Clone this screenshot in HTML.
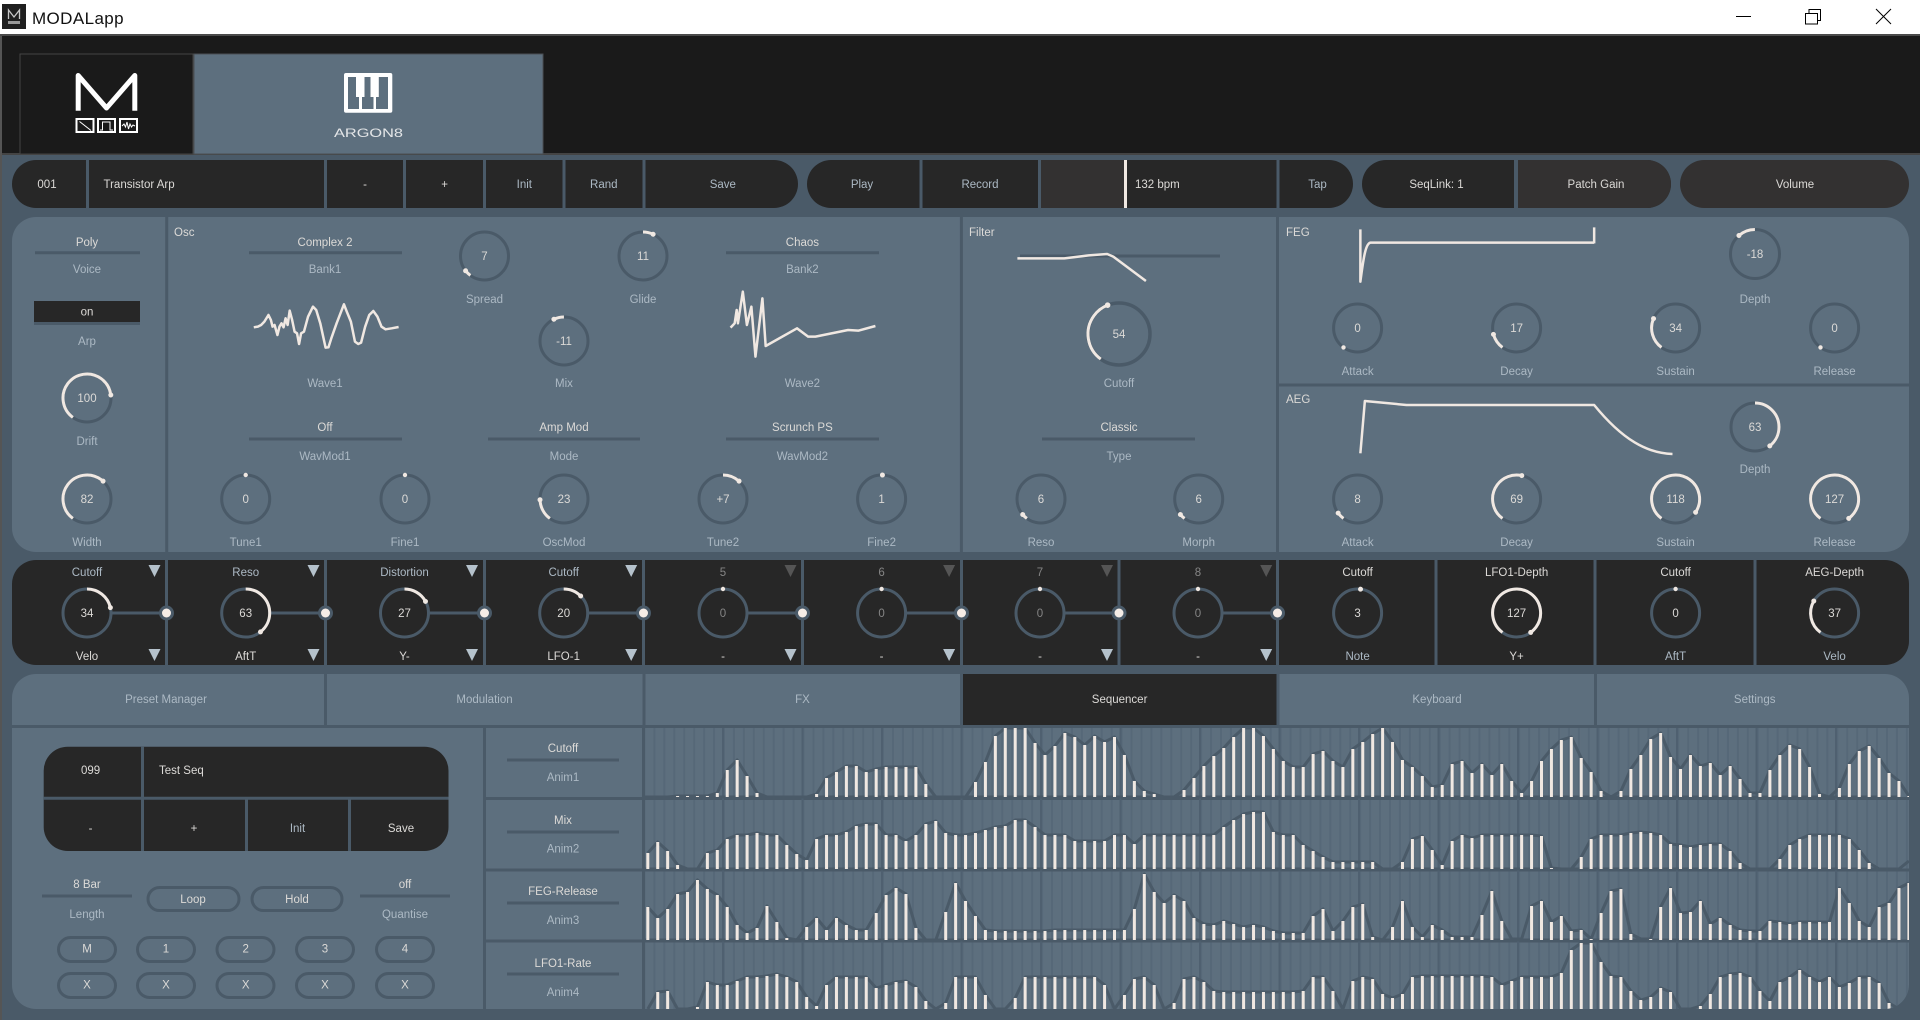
<!DOCTYPE html>
<html><head><meta charset="utf-8"><title>MODALapp</title>
<style>
html,body{margin:0;padding:0;width:1920px;height:1020px;overflow:hidden;background:#4a5a68}
svg{display:block;position:absolute;left:0;top:0}
text{font-family:"Liberation Sans",sans-serif;font-size:11.5px;dominant-baseline:central;text-anchor:middle;fill:#acb9c4;transform:translateY(.8px)}
.w{fill:#dcdad7}.g{fill:#858585}.st{text-anchor:start}
.t{fill:none;stroke:#4a5a68;stroke-width:3}
.a{fill:none;stroke:#f0e8e2;stroke-width:3}
.d{fill:#f0e8e2}
.ln{stroke:#4a5a68;stroke-width:3;fill:none}
.e{fill:none;stroke:#4a5a68;stroke-width:3;vector-effect:non-scaling-stroke;stroke-linejoin:round}
.b{fill:none;stroke:#f0e8e2;stroke-width:3;vector-effect:non-scaling-stroke}
.c{fill:none;stroke:#f0e8e2;stroke-width:2.5;vector-effect:non-scaling-stroke;stroke-linejoin:round}
.p{fill:none;stroke:#4a5a68;stroke-width:3}
</style></head><body>
<svg width="1920" height="1020" viewBox="0 0 1920 1020" xmlns="http://www.w3.org/2000/svg">
<defs><pattern id="s" x="643.5" y="0" width="9.94" height="10" patternUnits="userSpaceOnUse"><rect width="2" height="10" fill="#566878"/></pattern></defs>
<!-- title bar -->
<rect width="1920" height="34" fill="#fff"/>
<rect y="34" width="1920" height="2" fill="#4a4a4a"/>
<rect x="2" y="4" width="24" height="25" fill="#1f1f1f"/>
<path d="M8.5 19V10L14 17L19.5 10V19" fill="none" stroke="#c8c8c8" stroke-width="1.3"/>
<rect x="8" y="21" width="12" height="3" fill="#999"/>
<text x="32" y="17.5" class="st" style="font-size:17px;fill:#111;letter-spacing:.4px">MODALapp</text>
<path d="M1736 16.5H1751" stroke="#000" stroke-width="1"/>
<path d="M1805.5 13.5H1817.5V24H1805.5ZM1809 13.5V9.5H1820.5V20.5H1817.5" fill="none" stroke="#000" stroke-width="1"/>
<path d="M1876 9L1891 24M1891 9L1876 24" stroke="#000" stroke-width="1"/>
<!-- header -->
<rect y="36" width="1920" height="118" fill="#1a1a1a"/>
<rect y="153" width="1920" height="2" fill="#444"/>
<rect x="20" y="54" width="173" height="100" fill="#1a1a1a" stroke="#444" stroke-width="1"/>
<rect x="194" y="54" width="349" height="100" fill="#5d6f7e" stroke="#4a4f54" stroke-width="1"/>
<path d="M78.2 110.7V75.5L106.5 108L134.8 75.5V110.7" fill="none" stroke="#fff" stroke-width="5" stroke-linejoin="round"/>
<rect x="76.5" y="119" width="17" height="13" fill="none" stroke="#fff" stroke-width="2"/>
<rect x="98" y="119" width="17" height="13" fill="none" stroke="#fff" stroke-width="2"/>
<rect x="120" y="119" width="17" height="13" fill="none" stroke="#fff" stroke-width="2"/>
<path d="M79.5 121.5L91 130.5" fill="none" stroke="#fff" stroke-width="1"/>
<path d="M100 130H102.5V122H110V130H113" fill="none" stroke="#fff" stroke-width="1"/>
<path d="M122 126L124 124L125.5 127L127 122L128.5 129L130 124L131.5 127L133 125L135 126" fill="none" stroke="#fff" stroke-width="1"/>
<rect x="344" y="73" width="48.3" height="39.7" rx="2" fill="#fff"/>
<path d="M348 77H356V97H359V109H348ZM364.5 77H370.5V97H373.5V109H362V97H364.5ZM378.8 77H388V109H376V97H378.8Z" fill="#5d6f7e"/>
<text x="368.5" y="133" textLength="69" lengthAdjust="spacingAndGlyphs" style="font-size:11.5px;fill:#e4e6e8">ARGON8</text>
<!-- top row -->
<rect x="12" y="160" width="786" height="48" rx="24" fill="#272727"/>
<path d="M87.5 160V208M325.5 160V208M404.5 160V208M484.5 160V208M564 160V208M644 160V208" class="ln"/>
<rect x="807" y="160" width="546" height="48" rx="24" fill="#272727"/>
<rect x="1041" y="160" width="83" height="48" fill="#333131"/>
<rect x="1124" y="160" width="3" height="48" fill="#f0e8e2"/>
<path d="M921 160V208M1039.5 160V208M1278 160V208" class="ln"/>
<rect x="1362" y="160" width="309" height="48" rx="24" fill="#272727"/>
<path d="M1518 160H1647a24 24 0 0 1 0 48H1518Z" fill="#333131"/>
<rect x="1514" y="160" width="4" height="48" fill="#4a5a68"/>
<rect x="1680" y="160" width="229" height="48" rx="24" fill="#333131"/>
<g class="w">
<text class="w" x="47" y="184">001</text><text class="w st" x="103.5" y="184">Transistor Arp</text>
<text class="w" x="365" y="184">-</text><text class="w" x="444.6" y="184">+</text><text x="524.3" y="184">Init</text><text x="603.8" y="184">Rand</text><text x="722.8" y="184">Save</text>
<text x="862" y="184">Play</text><text x="980" y="184">Record</text><text class="w st" x="1135" y="184">132 bpm</text><text x="1317.5" y="184">Tap</text>
<text class="w" x="1436.5" y="184">SeqLink: 1</text><text class="w" x="1596" y="184">Patch Gain</text><text class="w" x="1795" y="184">Volume</text>
</g>
<!-- synth panel -->
<rect x="12" y="217" width="1897" height="335" rx="24" fill="#5d6f7e"/>
<path d="M166.7 217V552M961.4 217V552M1277.5 217V552M1278 385H1909" class="ln"/>
<!-- selector lines -->
<path d="M35 252.7H140M249 252.7H402M726 252.7H879M249 439H402M488 439H640M726 439H879M1042 439H1195M1020 256H1220M34 323.5H140" class="ln"/>
<rect x="34" y="301" width="106" height="21" fill="#272727"/>
<text class="w" x="87" y="242">Poly</text><text x="87" y="269">Voice</text><text class="w" x="87" y="311.5">on</text><text x="87" y="341">Arp</text>
<text x="87" y="441">Drift</text><text x="87" y="542">Width</text>
<text class="w st" x="174" y="232">Osc</text><text class="w st" x="969" y="232">Filter</text><text class="w st" x="1286" y="232">FEG</text><text class="w st" x="1286" y="399">AEG</text>
<text class="w" x="325" y="242">Complex 2</text><text x="325" y="269">Bank1</text><text x="325" y="383">Wave1</text>
<text class="w" x="325" y="427">Off</text><text x="325" y="456">WavMod1</text>
<text class="w" x="802.4" y="242">Chaos</text><text x="802.4" y="269">Bank2</text><text x="802.4" y="383">Wave2</text>
<text class="w" x="802.4" y="427">Scrunch PS</text><text x="802.4" y="456">WavMod2</text>
<text class="w" x="564" y="427">Amp Mod</text><text x="564" y="456">Mode</text>
<text x="484.5" y="299">Spread</text><text x="643" y="299">Glide</text><text x="564" y="383">Mix</text>
<text x="245.7" y="542">Tune1</text><text x="405" y="542">Fine1</text><text x="564" y="542">OscMod</text><text x="723" y="542">Tune2</text><text x="881.6" y="542">Fine2</text>
<text x="1119" y="383">Cutoff</text><text class="w" x="1119" y="427">Classic</text><text x="1119" y="456">Type</text><text x="1041" y="542">Reso</text><text x="1198.7" y="542">Morph</text>
<text x="1755" y="299">Depth</text><text x="1755" y="469">Depth</text>
<text x="1357.6" y="371">Attack</text><text x="1516.6" y="371">Decay</text><text x="1675.6" y="371">Sustain</text><text x="1834.6" y="371">Release</text>
<text x="1357.6" y="542">Attack</text><text x="1516.6" y="542">Decay</text><text x="1675.6" y="542">Sustain</text><text x="1834.6" y="542">Release</text>
<!-- wave graphs, in zoom units -->
<g transform="translate(0,210) scale(.408,.3333)"><polyline class="c" points="622,352 632,350 640,345 648,335 658,315 664,330 668,350 673,345 680,375 685,350 690,340 695,352 700,325 705,345 710,302 716,330 722,365 728,370 733,402 738,370 745,365 755,320 767,290 775,300 785,340 798,413 805,412 812,385 825,340 843,283 850,305 860,335 870,395 878,402 885,398 895,350 905,315 915,303 925,320 935,350 945,358 960,355 977,351"/></g>
<g transform="translate(640,210) scale(.408,.3333)"><polyline class="c" points="222,353 232,340 237,300 240,340 252,245 262,345 273,290 283,440 300,265 308,408 385,355 412,380 430,380 510,360 535,362 577,348"/>
<polyline class="c" points="925,145 1040,145 1100,136 1145,132 1160,140 1240,213"/></g>
<g transform="translate(1280,210) scale(.408,.3333)">
<path class="c" d="M197,58V215C205,140 210,100 222,98H770M770,52V100"/>
<path class="c" d="M197,730L208,573L310,585H770C840,690 900,730 962,732"/></g>
<!-- knobs -->
<g transform="translate(87,398)"><circle r="24" class="t"/><circle r="24" class="a" pathLength="360" stroke-dasharray="226.8 720" transform="rotate(-234)"/><circle cy="-24" r="2.5" class="d" transform="rotate(82.8)"/><text class="w" y="0">100</text></g>
<g transform="translate(87,499)"><circle r="24" class="t"/><circle r="24" class="a" pathLength="360" stroke-dasharray="186 720" transform="rotate(-234)"/><circle cy="-24" r="2.5" class="d" transform="rotate(42)"/><text class="w">82</text></g>
<g transform="translate(484.5,256)"><circle r="24" class="t"/><circle r="24" class="a" pathLength="360" stroke-dasharray="15.9 720" transform="rotate(-234)"/><circle cy="-24" r="2.5" class="d" transform="rotate(-128)"/><text class="w">7</text></g>
<g transform="translate(643,256)"><circle r="24" class="t"/><circle r="24" class="a" pathLength="360" stroke-dasharray="25 720" transform="rotate(-90)"/><circle cy="-24" r="2.5" class="d" transform="rotate(25)"/><text class="w">11</text></g>
<g transform="translate(564,341)"><circle r="24" class="t"/><circle r="24" class="a" pathLength="360" stroke-dasharray="25 720" transform="rotate(-115)"/><circle cy="-24" r="2.5" class="d" transform="rotate(-25)"/><text class="w">-11</text></g>
<g transform="translate(245.7,499)"><circle r="24" class="t"/><circle cy="-24" r="2.2" class="d"/><text class="w">0</text></g>
<g transform="translate(405,499)"><circle r="24" class="t"/><circle cy="-24" r="2.2" class="d"/><text class="w">0</text></g>
<g transform="translate(564,499)"><circle r="24" class="t"/><circle r="24" class="a" pathLength="360" stroke-dasharray="52.2 720" transform="rotate(-234)"/><circle cy="-24" r="2.5" class="d" transform="rotate(-91.8)"/><text class="w">23</text></g>
<g transform="translate(723,499)"><circle r="24" class="t"/><circle r="24" class="a" pathLength="360" stroke-dasharray="42 720" transform="rotate(-90)"/><circle cy="-24" r="2.5" class="d" transform="rotate(42)"/><text class="w">+7</text></g>
<g transform="translate(881.6,499)"><circle r="24" class="t"/><circle cy="-24" r="2.5" class="d" transform="rotate(2)"/><text class="w">1</text></g>
<g transform="translate(1119,334)"><circle r="31" class="t" style="stroke-width:3.5"/><circle r="31" class="a" pathLength="360" stroke-dasharray="122.5 720" transform="rotate(-234)"/><circle cy="-31" r="2.8" class="d" transform="rotate(-21.5)"/><text class="w">54</text></g>
<g transform="translate(1041,499)"><circle r="24" class="t"/><circle r="24" class="a" pathLength="360" stroke-dasharray="13.6 720" transform="rotate(-234)"/><circle cy="-24" r="2.5" class="d" transform="rotate(-130.4)"/><text class="w">6</text></g>
<g transform="translate(1198.7,499)"><circle r="24" class="t"/><circle r="24" class="a" pathLength="360" stroke-dasharray="13.6 720" transform="rotate(-234)"/><circle cy="-24" r="2.5" class="d" transform="rotate(-130.4)"/><text class="w">6</text></g>
<g transform="translate(1755,254)"><circle r="24.5" class="t"/><circle r="24.5" class="a" pathLength="360" stroke-dasharray="41 720" transform="rotate(-131)"/><circle cy="-24.5" r="2.5" class="d" transform="rotate(-41)"/><text class="w">-18</text></g>
<g transform="translate(1755,427)"><circle r="24" class="t"/><circle r="24" class="a" pathLength="360" stroke-dasharray="142 720" transform="rotate(-90)"/><circle cy="-24" r="2.5" class="d" transform="rotate(142)"/><text class="w">63</text></g>
<g transform="translate(1357.6,328)"><circle r="24" class="t"/><circle cy="-24" r="2.2" class="d" transform="rotate(-144)"/><text class="w">0</text></g>
<g transform="translate(1516.6,328)"><circle r="24" class="t"/><circle r="24" class="a" pathLength="360" stroke-dasharray="38.6 720" transform="rotate(-234)"/><circle cy="-24" r="2.5" class="d" transform="rotate(-105.4)"/><text class="w">17</text></g>
<g transform="translate(1675.6,328)"><circle r="24" class="t"/><circle r="24" class="a" pathLength="360" stroke-dasharray="77.1 720" transform="rotate(-234)"/><circle cy="-24" r="2.5" class="d" transform="rotate(-66.9)"/><text class="w">34</text></g>
<g transform="translate(1834.6,328)"><circle r="24" class="t"/><circle cy="-24" r="2.2" class="d" transform="rotate(-144)"/><text class="w">0</text></g>
<g transform="translate(1357.6,499)"><circle r="24" class="t"/><circle r="24" class="a" pathLength="360" stroke-dasharray="18.1 720" transform="rotate(-234)"/><circle cy="-24" r="2.5" class="d" transform="rotate(-125.9)"/><text class="w">8</text></g>
<g transform="translate(1516.6,499)"><circle r="24" class="t"/><circle r="24" class="a" pathLength="360" stroke-dasharray="156.5 720" transform="rotate(-234)"/><circle cy="-24" r="2.5" class="d" transform="rotate(12.5)"/><text class="w">69</text></g>
<g transform="translate(1675.6,499)"><circle r="24" class="t"/><circle r="24" class="a" pathLength="360" stroke-dasharray="267.6 720" transform="rotate(-234)"/><circle cy="-24" r="2.5" class="d" transform="rotate(123.6)"/><text class="w">118</text></g>
<g transform="translate(1834.6,499)"><circle r="24" class="t"/><circle r="24" class="a" pathLength="360" stroke-dasharray="288 720" transform="rotate(-234)"/><circle cy="-24" r="2.5" class="d" transform="rotate(144)"/><text class="w">127</text></g>
<!-- mod row -->
<rect x="12" y="560" width="1897" height="105" rx="24" fill="#272727"/>
<path d="M166.5 560V665M325.5 560V665M484.5 560V665M643.5 560V665M802.5 560V665M961.5 560V665M1119 560V665M1277.5 560V665M1436 560V665M1595 560V665M1755 560V665" class="ln"/>
<path d="M111 613H166.5M269.7 613H325.5M428.5 613H484.5M587.7 613H643.5M747 613H802.5M905.6 613H961.5M1064 613H1119M1222 613H1277.5" class="ln"/>
<g fill="#4a5a68"><circle cx="166.5" cy="613" r="7.5"/><circle cx="325.5" cy="613" r="7.5"/><circle cx="484.5" cy="613" r="7.5"/><circle cx="643.5" cy="613" r="7.5"/><circle cx="802.5" cy="613" r="7.5"/><circle cx="961.5" cy="613" r="7.5"/><circle cx="1119" cy="613" r="7.5"/><circle cx="1277.5" cy="613" r="7.5"/></g>
<g fill="#f5ece6"><ellipse cx="166.5" cy="613" rx="4.5" ry="4.5"/><ellipse cx="325.5" cy="613" rx="4.5" ry="4.5"/><ellipse cx="484.5" cy="613" rx="4.5" ry="4.5"/><ellipse cx="643.5" cy="613" rx="4.5" ry="4.5"/><ellipse cx="802.5" cy="613" rx="4.5" ry="4.5"/><ellipse cx="961.5" cy="613" rx="4.5" ry="4.5"/><ellipse cx="1119" cy="613" rx="4.5" ry="4.5"/><ellipse cx="1277.5" cy="613" rx="4.5" ry="4.5"/></g>
<g fill="#b5c2cc"><path d="M148.5 565H160.5L154.5 577ZM307.5 565H319.5L313.5 577ZM466 565H478L472 577ZM625.2 565H637.2L631.2 577Z"/>
<path d="M148.5 649H160.5L154.5 661ZM307.5 649H319.5L313.5 661ZM466 649H478L472 661ZM625.2 649H637.2L631.2 661ZM784.5 649H796.5L790.5 661ZM943.1 649H955.1L949.1 661ZM1101 649H1113L1107 661ZM1260.2 649H1272.2L1266.2 661Z"/></g>
<path d="M784.5 565H796.5L790.5 577ZM943.1 565H955.1L949.1 577ZM1101 565H1113L1107 577ZM1260.2 565H1272.2L1266.2 577Z" fill="#555"/>
<text x="87" y="572">Cutoff</text><text x="245.7" y="572">Reso</text><text x="404.5" y="572">Distortion</text><text x="563.7" y="572">Cutoff</text>
<text class="g" x="723" y="572">5</text><text class="g" x="881.6" y="572">6</text><text class="g" x="1040" y="572">7</text><text class="g" x="1198" y="572">8</text>
<text class="w" x="1357.6" y="572">Cutoff</text><text class="w" x="1516.6" y="572">LFO1-Depth</text><text class="w" x="1675.6" y="572">Cutoff</text><text class="w" x="1834.6" y="572">AEG-Depth</text>
<text class="w" x="87" y="656">Velo</text><text class="w" x="245.7" y="656">AftT</text><text class="w" x="404.5" y="656">Y-</text><text class="w" x="563.7" y="656">LFO-1</text>
<text class="w" x="723" y="656">-</text><text class="w" x="881.6" y="656">-</text><text class="w" x="1040" y="656">-</text><text class="w" x="1198" y="656">-</text>
<text x="1357.6" y="656">Note</text><text class="w" x="1516.6" y="656">Y+</text><text x="1675.6" y="656">AftT</text><text x="1834.6" y="656">Velo</text>
<g transform="translate(87,613)"><circle r="24" class="t" fill="#272727"/><circle r="24" class="a" pathLength="360" stroke-dasharray="77 720" transform="rotate(-90)"/><circle cy="-24" r="2.5" class="d" transform="rotate(77)"/><text class="w">34</text></g>
<g transform="translate(245.7,613)"><circle r="24" class="t"/><circle r="24" class="a" pathLength="360" stroke-dasharray="142 720" transform="rotate(-90)"/><circle cy="-24" r="2.5" class="d" transform="rotate(142)"/><text class="w">63</text></g>
<g transform="translate(404.5,613)"><circle r="24" class="t"/><circle r="24" class="a" pathLength="360" stroke-dasharray="61 720" transform="rotate(-90)"/><circle cy="-24" r="2.5" class="d" transform="rotate(61)"/><text class="w">27</text></g>
<g transform="translate(563.7,613)"><circle r="24" class="t"/><circle r="24" class="a" pathLength="360" stroke-dasharray="45 720" transform="rotate(-90)"/><circle cy="-24" r="2.5" class="d" transform="rotate(45)"/><text class="w">20</text></g>
<g transform="translate(723,613)"><circle r="24" class="t"/><circle cy="-24" r="2.2" class="d"/><text class="g">0</text></g>
<g transform="translate(881.6,613)"><circle r="24" class="t"/><circle cy="-24" r="2.2" class="d"/><text class="g">0</text></g>
<g transform="translate(1040,613)"><circle r="24" class="t"/><circle cy="-24" r="2.2" class="d"/><text class="g">0</text></g>
<g transform="translate(1198,613)"><circle r="24" class="t"/><circle cy="-24" r="2.2" class="d"/><text class="g">0</text></g>
<g transform="translate(1357.6,613)"><circle r="24" class="t"/><circle cy="-24" r="2.5" class="d" transform="rotate(7)"/><text class="w">3</text></g>
<g transform="translate(1516.6,613)"><circle r="24" class="t"/><circle r="24" class="a" pathLength="360" stroke-dasharray="288 720" transform="rotate(-234)"/><circle cy="-24" r="2.5" class="d" transform="rotate(144)"/><text class="w">127</text></g>
<g transform="translate(1675.6,613)"><circle r="24" class="t"/><circle cy="-24" r="2.2" class="d"/><text class="w">0</text></g>
<g transform="translate(1834.6,613)"><circle r="24" class="t"/><circle r="24" class="a" pathLength="360" stroke-dasharray="83.9 720" transform="rotate(-234)"/><circle cy="-24" r="2.5" class="d" transform="rotate(-60.1)"/><text class="w">37</text></g>
<!-- tabs -->
<path d="M12 725V698a24 24 0 0 1 24-24H1885a24 24 0 0 1 24 24V725Z" fill="#5d6f7e"/>
<rect x="962.5" y="674" width="315" height="51" fill="#272727"/>
<path d="M325.5 674V725M644 674V725M961.5 674V725M1278 674V725M1595.5 674V725" class="ln"/>
<text x="166" y="699">Preset Manager</text><text x="484.5" y="699">Modulation</text><text x="802.5" y="699">FX</text><text class="w" x="1119.6" y="699">Sequencer</text><text x="1437" y="699">Keyboard</text><text x="1754.7" y="699">Settings</text>
<!-- bottom panel -->
<path d="M12 728H1909V985a24 24 0 0 1-24 24H36a24 24 0 0 1-24-24Z" fill="#5d6f7e"/>
<path d="M645 728H1909V985a24 24 0 0 1-24 24H645Z" fill="url(#s)"/>
<path d="M484.5 728V1009M643.5 728V1009M486 798.5H1909M486 870H1909M486 941H1909" class="ln"/>
<path d="M723 728V1009M802.5 728V1009M882 728V1009M961.5 728V1009M1041 728V1009M1120.5 728V1009M1200 728V1009M1279.5 728V1009M1359 728V1009M1438.5 728V1009M1518 728V1009M1597.5 728V1009M1677 728V1009M1756.5 728V1009M1836 728V1009" fill="none" stroke="#4f6070" stroke-width="2"/>
<!-- left sequencer -->
<rect x="43.7" y="746.7" width="404.8" height="104.3" rx="24" fill="#272727"/>
<path d="M43.7 798.3H448.5M142.5 746.7V851M246.5 798.3V851M349.5 798.3V851" class="ln"/>
<text class="w" x="90.6" y="770">099</text><text class="w st" x="159" y="770">Test Seq</text>
<text class="w" x="90.6" y="828">-</text><text class="w" x="194" y="828">+</text><text x="297.5" y="828">Init</text><text class="w" x="401" y="828">Save</text>
<text class="w" x="87" y="884">8 Bar</text><path d="M42 896H132M360 896H450" class="ln"/><text x="87" y="914">Length</text>
<text class="w" x="405" y="884">off</text><text x="405" y="914">Quantise</text>
<rect x="148" y="887.5" width="91" height="23" rx="11.5" class="p"/><text class="w" x="193" y="899">Loop</text>
<rect x="252" y="887.5" width="90" height="23" rx="11.5" class="p"/><text class="w" x="297" y="899">Hold</text>
<g class="p"><rect x="58.5" y="937.5" width="57" height="24" rx="12" class="p"/><rect x="137.5" y="937.5" width="57" height="24" rx="12" class="p"/><rect x="217" y="937.5" width="57" height="24" rx="12" class="p"/><rect x="296.5" y="937.5" width="57" height="24" rx="12" class="p"/><rect x="376.5" y="937.5" width="57" height="24" rx="12" class="p"/>
<rect x="58.5" y="973.5" width="57" height="24" rx="12" class="p"/><rect x="137.5" y="973.5" width="57" height="24" rx="12" class="p"/><rect x="217" y="973.5" width="57" height="24" rx="12" class="p"/><rect x="296.5" y="973.5" width="57" height="24" rx="12" class="p"/><rect x="376.5" y="973.5" width="57" height="24" rx="12" class="p"/></g>
<text class="w" x="87" y="948.5">M</text><text class="w" x="166" y="948.5">1</text><text class="w" x="245.7" y="948.5">2</text><text class="w" x="325" y="948.5">3</text><text class="w" x="405" y="948.5">4</text>
<text class="w" x="87" y="984.5">X</text><text class="w" x="166" y="984.5">X</text><text class="w" x="245.7" y="984.5">X</text><text class="w" x="325" y="984.5">X</text><text class="w" x="405" y="984.5">X</text>
<!-- anim labels -->
<path d="M507 760H619M507 832H619M507 903H619M507 974H619" class="ln"/>
<text class="w" x="563" y="748">Cutoff</text><text x="563" y="777">Anim1</text>
<text class="w" x="563" y="820">Mix</text><text x="563" y="848.5">Anim2</text>
<text class="w" x="563" y="891">FEG-Release</text><text x="563" y="920">Anim3</text>
<text class="w" x="563" y="963">LFO1-Rate</text><text x="563" y="992">Anim4</text>
<!-- sequence rows -->
<g transform="translate(647.8,797) scale(9.93,-1)">
<polyline class="e" points="0,0 1,0 2,0 3,1 4,1 5,1 6,1 7,4 8,27 9,37 10,21 11,4 12,0 13,0 14,0 15,0 16,0 17,3 18,19 19,25 20,31 21,31 22,25 23,28 24,30 25,30 26,30 27,30 28,13 29,0 30,0 31,0 32,0 33,15 34,35 35,61 36,69 37,69 38,69 39,54 40,42 41,51 42,64 43,60 44,52 45,61 46,55 47,60 48,42 49,16 50,6 51,3 52,0 53,0 54,7 55,19 56,31 57,41 58,49 59,60 60,69 61,69 62,61 63,48 64,36 65,30 66,30 67,43 68,46 69,36 70,30 71,48 72,55 73,63 74,69 75,55 76,37 77,30 78,21 79,10 80,12 81,33 82,36 83,24 84,33 85,22 86,33 87,16 88,4 89,16 90,36 91,48 92,57 93,60 94,39 95,25 96,6 97,0 98,6 99,28 100,42 101,58 102,64 103,40 104,28 105,42 106,31 107,34 108,22 109,31 110,18 111,4 112,4 113,27 114,42 115,52 116,48 117,30 118,3 119,0 120,9 121,33 122,46 123,51 124,39 125,24 126,16 127,1"/>
<path d="M-.4 0H126.2" class="e"/>
<path class="b" d="M3 0V1M4 0V1M5 0V1M6 0V1M7 0V4M8 0V27M9 0V37M10 0V21M11 0V4M17 0V3M18 0V19M19 0V25M20 0V31M21 0V31M22 0V25M23 0V28M24 0V30M25 0V30M26 0V30M27 0V30M28 0V13M33 0V15M34 0V35M35 0V61M36 0V69M37 0V69M38 0V69M39 0V54M40 0V42M41 0V51M42 0V64M43 0V60M44 0V52M45 0V61M46 0V55M47 0V60M48 0V42M49 0V16M50 0V6M51 0V3M54 0V7M55 0V19M56 0V31M57 0V41M58 0V49M59 0V60M60 0V69M61 0V69M62 0V61M63 0V48M64 0V36M65 0V30M66 0V30M67 0V43M68 0V46M69 0V36M70 0V30M71 0V48M72 0V55M73 0V63M74 0V69M75 0V55M76 0V37M77 0V30M78 0V21M79 0V10M80 0V12M81 0V33M82 0V36M83 0V24M84 0V33M85 0V22M86 0V33M87 0V16M88 0V4M89 0V16M90 0V36M91 0V48M92 0V57M93 0V60M94 0V39M95 0V25M96 0V6M98 0V6M99 0V28M100 0V42M101 0V58M102 0V64M103 0V40M104 0V28M105 0V42M106 0V31M107 0V34M108 0V22M109 0V31M110 0V18M111 0V4M112 0V4M113 0V27M114 0V42M115 0V52M116 0V48M117 0V30M118 0V3M120 0V9M121 0V33M122 0V46M123 0V51M124 0V39M125 0V24M126 0V16M127 0V1"/>
</g>
<g transform="translate(647.8,869) scale(9.93,-1)">
<polyline class="e" points="0,16 1,27 2,18 3,4 4,0 5,0 6,16 7,19 8,30 9,34 10,34 11,36 12,34 13,34 14,24 15,15 16,9 17,30 18,34 19,34 20,37 21,43 22,45 23,45 24,34 25,34 26,28 27,34 28,45 29,48 30,36 31,34 32,34 33,36 34,39 35,42 36,43 37,49 38,49 39,42 40,34 41,34 42,34 43,28 44,28 45,28 46,28 47,34 48,34 49,25 50,34 51,34 52,34 53,34 54,34 55,34 56,34 57,34 58,42 59,49 60,55 61,57 62,57 63,37 64,34 65,34 66,24 67,18 68,12 69,7 70,7 71,7 72,7 73,7 74,0 75,0 76,7 77,30 78,33 79,19 80,4 81,28 82,34 83,31 84,34 85,34 86,34 87,34 88,34 89,34 90,33 91,1 92,0 93,0 94,12 95,30 96,34 97,34 98,34 99,36 100,37 101,36 102,34 103,25 104,24 105,22 106,24 107,25 108,25 109,18 110,6 111,0 112,0 113,0 114,10 115,24 116,30 117,34 118,34 119,34 120,34 121,30 122,19 123,6 124,0 125,0 126,0 127,8"/>
<path d="M-.4 0H126.2" class="e"/>
<path class="b" d="M0 0V16M1 0V27M2 0V18M3 0V4M6 0V16M7 0V19M8 0V30M9 0V34M10 0V34M11 0V36M12 0V34M13 0V34M14 0V24M15 0V15M16 0V9M17 0V30M18 0V34M19 0V34M20 0V37M21 0V43M22 0V45M23 0V45M24 0V34M25 0V34M26 0V28M27 0V34M28 0V45M29 0V48M30 0V36M31 0V34M32 0V34M33 0V36M34 0V39M35 0V42M36 0V43M37 0V49M38 0V49M39 0V42M40 0V34M41 0V34M42 0V34M43 0V28M44 0V28M45 0V28M46 0V28M47 0V34M48 0V34M49 0V25M50 0V34M51 0V34M52 0V34M53 0V34M54 0V34M55 0V34M56 0V34M57 0V34M58 0V42M59 0V49M60 0V55M61 0V57M62 0V57M63 0V37M64 0V34M65 0V34M66 0V24M67 0V18M68 0V12M69 0V7M70 0V7M71 0V7M72 0V7M73 0V7M76 0V7M77 0V30M78 0V33M79 0V19M80 0V4M81 0V28M82 0V34M83 0V31M84 0V34M85 0V34M86 0V34M87 0V34M88 0V34M89 0V34M90 0V33M91 0V1M94 0V12M95 0V30M96 0V34M97 0V34M98 0V34M99 0V36M100 0V37M101 0V36M102 0V34M103 0V25M104 0V24M105 0V22M106 0V24M107 0V25M108 0V25M109 0V18M110 0V6M114 0V10M115 0V24M116 0V30M117 0V34M118 0V34M119 0V34M120 0V34M121 0V30M122 0V19M123 0V6"/>
</g>
<g transform="translate(647.8,940) scale(9.93,-1)">
<polyline class="e" points="0,33 1,22 2,31 3,46 4,48 5,60 6,51 7,45 8,33 9,15 10,7 11,12 12,34 13,18 14,2 15,0 16,13 17,22 18,10 19,22 20,15 21,10 22,10 23,27 24,45 25,52 26,46 27,12 28,0 29,0 30,28 31,57 32,39 33,24 34,10 35,9 36,9 37,9 38,9 39,9 40,9 41,10 42,10 43,10 44,10 45,10 46,10 47,10 48,10 49,31 50,66 51,48 52,37 53,45 54,39 55,22 56,16 57,15 58,19 59,16 60,13 61,15 62,13 63,9 64,7 65,7 66,7 67,24 68,31 69,9 70,19 71,33 72,36 73,3 74,0 75,13 76,39 77,13 78,3 79,15 80,10 81,3 82,3 83,3 84,25 85,49 86,19 87,1 88,1 89,34 90,39 91,18 92,24 93,9 94,10 95,1 96,27 97,49 98,51 99,6 100,1 101,1 102,33 103,52 104,27 105,28 106,39 107,16 108,22 109,15 110,10 111,9 112,9 113,19 114,18 115,16 116,18 117,18 118,18 119,18 120,52 121,37 122,19 123,13 124,33 125,37 126,52 127,57"/>
<path d="M-.4 0H126.2" class="e"/>
<path class="b" d="M0 0V33M1 0V22M2 0V31M3 0V46M4 0V48M5 0V60M6 0V51M7 0V45M8 0V33M9 0V15M10 0V7M11 0V12M12 0V34M13 0V18M14 0V2M16 0V13M17 0V22M18 0V10M19 0V22M20 0V15M21 0V10M22 0V10M23 0V27M24 0V45M25 0V52M26 0V46M27 0V12M30 0V28M31 0V57M32 0V39M33 0V24M34 0V10M35 0V9M36 0V9M37 0V9M38 0V9M39 0V9M40 0V9M41 0V10M42 0V10M43 0V10M44 0V10M45 0V10M46 0V10M47 0V10M48 0V10M49 0V31M50 0V66M51 0V48M52 0V37M53 0V45M54 0V39M55 0V22M56 0V16M57 0V15M58 0V19M59 0V16M60 0V13M61 0V15M62 0V13M63 0V9M64 0V7M65 0V7M66 0V7M67 0V24M68 0V31M69 0V9M70 0V19M71 0V33M72 0V36M73 0V3M75 0V13M76 0V39M77 0V13M78 0V3M79 0V15M80 0V10M81 0V3M82 0V3M83 0V3M84 0V25M85 0V49M86 0V19M89 0V34M90 0V39M91 0V18M92 0V24M93 0V9M94 0V10M95 0V1M96 0V27M97 0V49M98 0V51M99 0V6M101 0V1M102 0V33M103 0V52M104 0V27M105 0V28M106 0V39M107 0V16M108 0V22M109 0V15M110 0V10M111 0V9M112 0V9M113 0V19M114 0V18M115 0V16M116 0V18M117 0V18M118 0V18M119 0V18M120 0V52M121 0V37M122 0V19M123 0V13M124 0V33M125 0V37M126 0V52M127 0V57"/>
</g>
<g transform="translate(647.8,1009) scale(9.93,-1)">
<polyline class="e" points="0,0 1,17 2,18 3,0 4,0 5,2 6,27 7,24 8,24 9,28 10,32 11,32 12,33 13,35 14,32 15,27 16,12 17,3 18,24 19,32 20,32 21,32 22,32 23,21 24,24 25,27 26,28 27,22 28,8 29,0 30,6 31,32 32,32 33,32 34,14 35,0 36,0 37,11 38,32 39,32 40,32 41,32 42,32 43,32 44,32 45,32 46,24 47,0 48,14 49,30 50,32 51,24 52,0 53,6 54,30 55,32 56,27 57,18 58,17 59,17 60,17 61,17 62,17 63,17 64,17 65,17 66,18 67,32 68,32 69,18 70,0 71,28 72,32 73,30 74,15 75,11 76,15 77,32 78,33 79,33 80,33 81,33 82,33 83,33 84,33 85,32 86,24 87,28 88,32 89,32 90,32 91,32 92,36 93,59 94,66 95,66 96,47 97,33 98,32 99,18 100,9 101,12 102,21 103,17 104,0 105,0 106,3 107,15 108,32 109,35 110,36 111,32 112,18 113,8 114,27 115,32 116,39 117,32 118,27 119,32 120,22 121,26 122,32 123,32 124,26 125,6 126,0 127,0"/>
<path class="b" d="M1 0V17M2 0V18M5 0V2M6 0V27M7 0V24M8 0V24M9 0V28M10 0V32M11 0V32M12 0V33M13 0V35M14 0V32M15 0V27M16 0V12M17 0V3M18 0V24M19 0V32M20 0V32M21 0V32M22 0V32M23 0V21M24 0V24M25 0V27M26 0V28M27 0V22M28 0V8M30 0V6M31 0V32M32 0V32M33 0V32M34 0V14M37 0V11M38 0V32M39 0V32M40 0V32M41 0V32M42 0V32M43 0V32M44 0V32M45 0V32M46 0V24M48 0V14M49 0V30M50 0V32M51 0V24M53 0V6M54 0V30M55 0V32M56 0V27M57 0V18M58 0V17M59 0V17M60 0V17M61 0V17M62 0V17M63 0V17M64 0V17M65 0V17M66 0V18M67 0V32M68 0V32M69 0V18M71 0V28M72 0V32M73 0V30M74 0V15M75 0V11M76 0V15M77 0V32M78 0V33M79 0V33M80 0V33M81 0V33M82 0V33M83 0V33M84 0V33M85 0V32M86 0V24M87 0V28M88 0V32M89 0V32M90 0V32M91 0V32M92 0V36M93 0V59M94 0V66M95 0V66M96 0V47M97 0V33M98 0V32M99 0V18M100 0V9M101 0V12M102 0V21M103 0V17M106 0V3M107 0V15M108 0V32M109 0V35M110 0V36M111 0V32M112 0V18M113 0V8M114 0V27M115 0V32M116 0V39M117 0V32M118 0V27M119 0V32M120 0V22M121 0V26M122 0V32M123 0V32M124 0V26M125 0V6"/>
</g>
<path d="M12 1009H1920V1020H0V155H12Z" fill="#4a5a68"/>
<rect x="1909" y="217" width="11" height="803" fill="#4a5a68"/>
<path d="M1885 1009a24 24 0 0 0 24-24V1009Z" fill="#4a5a68"/>
<rect x="0" y="36" width="2" height="984" fill="#555"/>
</svg>
</body></html>
